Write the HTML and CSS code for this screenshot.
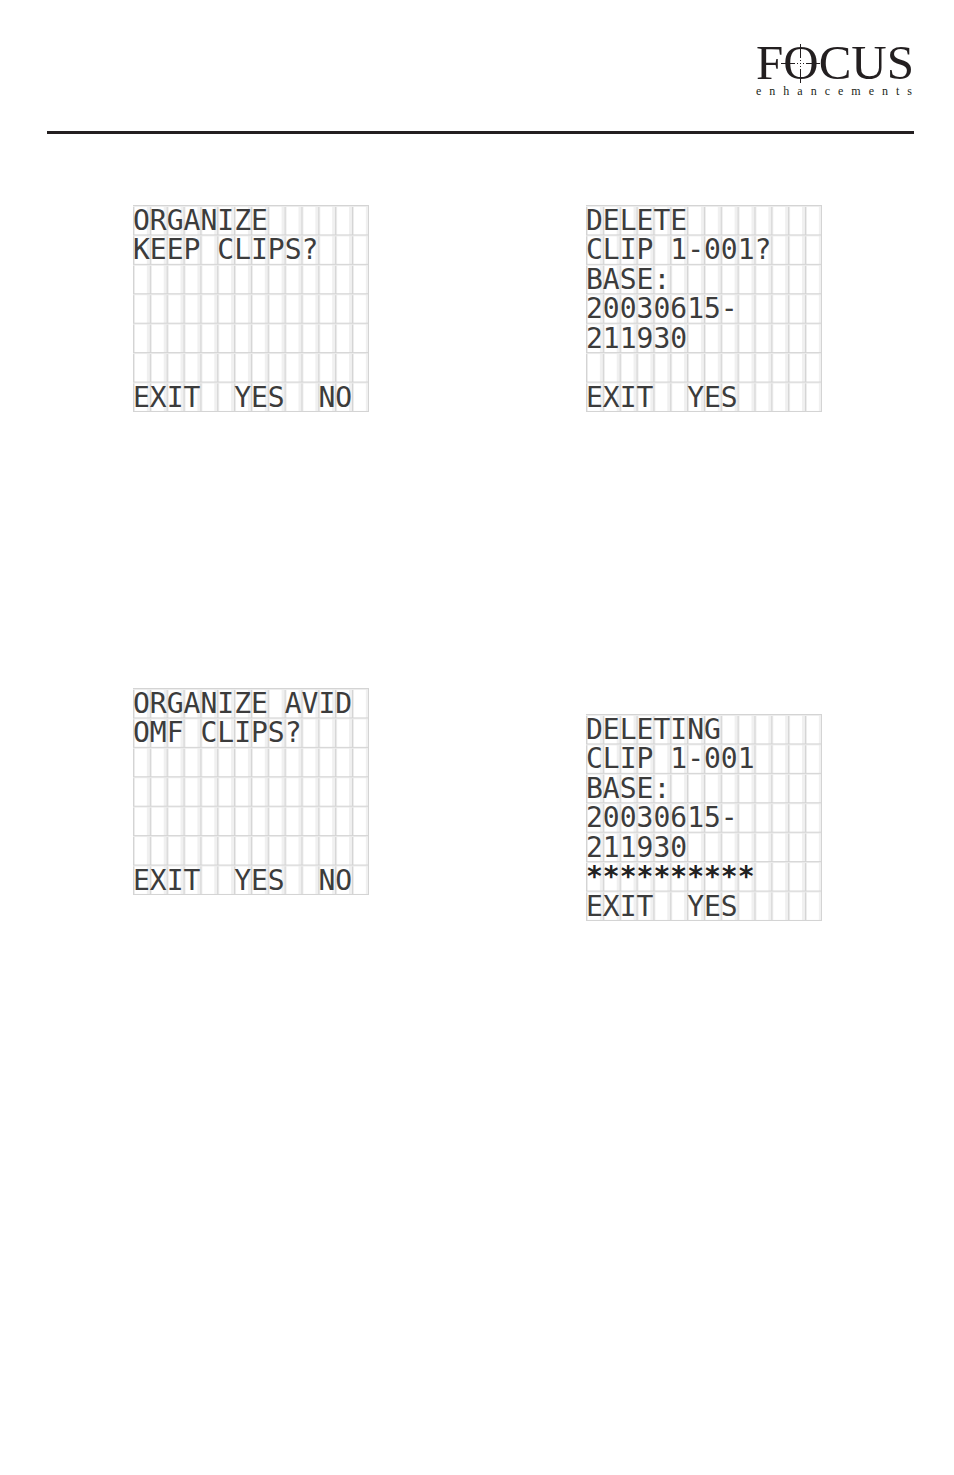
FILE: index.html
```html
<!DOCTYPE html>
<html lang="en">
<head>
  <meta charset="UTF-8" />
  <title>FOCUS enhancements</title>
  <link rel="stylesheet" href="styles.css">
</head>
<body>

<header class="page-header">
  <div class="logo">
    <div class="logo-name">FOCUS</div>
    <svg class="crosshair" viewBox="0 0 41 41" width="41" height="41" aria-hidden="true">
      <path d="M20.5 1V15M20.5 26V40M1 20.5H15M26 20.5H40" />
      <path d="M20.5 17V18M20.5 23V24M17 20.5H18M23 20.5H24M20 20.5H21" />
    </svg>
    <div class="logo-tagline">enhancements</div>
  </div>
</header>

<main class="columns">
  <div class="column">
    <div class="lcd">
      <div>ORGANIZE</div>
      <div>KEEP CLIPS?</div>
      <div></div>
      <div></div>
      <div></div>
      <div></div>
      <div>EXIT  YES  NO</div>
    </div>
    <div class="lcd">
      <div>ORGANIZE AVID</div>
      <div>OMF CLIPS?</div>
      <div></div>
      <div></div>
      <div></div>
      <div></div>
      <div>EXIT  YES  NO</div>
    </div>
  </div>

  <div class="column column-wide">
    <div class="lcd">
      <div>DELETE</div>
      <div>CLIP 1-001?</div>
      <div>BASE:</div>
      <div>20030615-</div>
      <div>211930</div>
      <div></div>
      <div>EXIT  YES</div>
    </div>
    <div class="lcd">
      <div>DELETING</div>
      <div>CLIP 1-001</div>
      <div>BASE:</div>
      <div>20030615-</div>
      <div>211930</div>
      <div class="progress">**********</div>
      <div>EXIT  YES</div>
    </div>
  </div>
</main>

</body>
</html>
```
FILE: styles.css
```css
* { box-sizing: border-box; }
body {
  margin: 0;
  padding: 40px 40px 40px 47px;
  background-color: #fff;
  color: #231f20;
}
.page-header {
  display: flex;
  justify-content: flex-end;
  padding-bottom: 34px;
  border-bottom: 3px solid #231f20;
}
.logo {
  position: relative;
  font-family: 'Liberation Serif', serif;
}
.logo-name {
  font-size: 49px;
  line-height: 46px;
}
.logo-tagline {
  margin-right: -8px;
  font-size: 12px;
  line-height: 11px;
  letter-spacing: 8px;
}
/* sight drawn over the O */
.crosshair {
  position: absolute;
  left: 24px;
  top: 3px;
  fill: none;
  stroke: #231f20;
  stroke-width: 1;
}
.columns {
  display: grid;
  grid-template-columns: 1fr 1fr;
  column-gap: 39px;
  padding-top: 71px;
}
.column {
  display: flex;
  flex-direction: column;
  align-items: flex-start;
  gap: 276px;
  padding-left: 86px;
}
.column-wide {
  gap: 302px;
}
/* 14 x 7 character display */
.lcd {
  display: grid;
  grid-template-rows: repeat(7, 1fr);
  width: 14ch;
  height: 207px;
  font-family: 'DejaVu Sans Mono', monospace;
  font-size: 28px;
  line-height: 31px;
  white-space: pre;
  color: #3c3c3c;
  border-right: 1px solid #d4d4d4;
  border-bottom: 1px solid #d4d4d4;
  background-color: #fff;
  background-image:
    linear-gradient(to bottom, #d4d4d4 1px, #ececec 1px, #ececec 2px, transparent 2px),
    linear-gradient(to right, #d4d4d4 1px, #ececec 1px, #ececec 2px, transparent 2px, transparent 14px, #f0f0f0 14px);
  background-size: 100% calc(100% / 7), 1ch 100%;
}
.lcd > div {
  height: 29px;
}
.progress {
  font-weight: bold;
  color: #222;
}
```
